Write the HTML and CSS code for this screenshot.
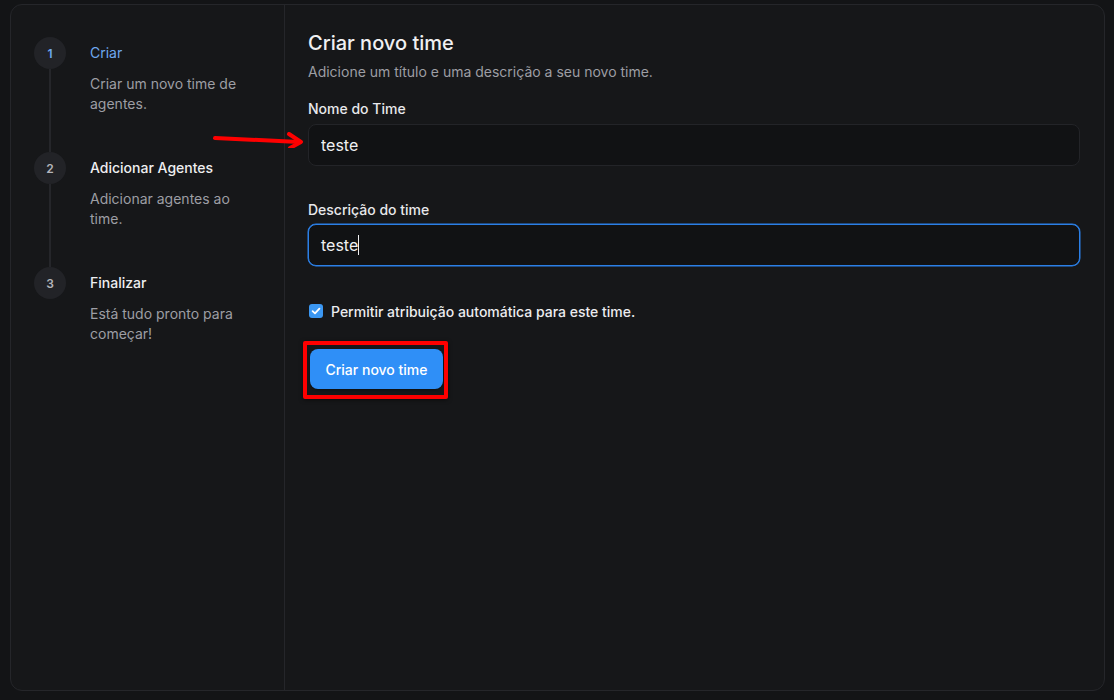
FILE: index.html
```html
<!DOCTYPE html>
<html lang="pt-BR">
<head>
	<meta charset="utf-8">
	<title>Criar novo time</title>
	<link rel="stylesheet" href="styles.css">
</head>
<body>
	<!-- Wizard card: steps on the left, form on the right. -->
	<div class="wizard">
		<aside class="steps">
			<div class="step is-active">
				<div class="step-rail">
					<span class="step-num">1</span>
					<span class="step-line"></span>
				</div>
				<div class="step-text">
					<div class="step-title">Criar</div>
					<div class="step-desc">Criar um novo time de agentes.</div>
				</div>
			</div>
			<div class="step">
				<div class="step-rail">
					<span class="step-num">2</span>
					<span class="step-line"></span>
				</div>
				<div class="step-text">
					<div class="step-title">Adicionar Agentes</div>
					<div class="step-desc">Adicionar agentes ao time.</div>
				</div>
			</div>
			<div class="step is-last">
				<div class="step-rail">
					<span class="step-num">3</span>
				</div>
				<div class="step-text">
					<div class="step-title">Finalizar</div>
					<div class="step-desc">Está tudo pronto para começar!</div>
				</div>
			</div>
		</aside>

		<main class="content">
			<h1 class="page-title">Criar novo time</h1>
			<p class="page-sub">Adicione um título e uma descrição a seu novo time.</p>

			<form class="team-form">
				<label class="field-label" for="team-name">Nome do Time</label>
				<div class="field">
					<input class="field-input" id="team-name" type="text" value="teste">
					<!-- annotation arrow -->
					<svg class="hint-arrow" width="92" height="16" viewBox="0 0 92 16">
						<path d="M2 6 L86 10" stroke="#f00" stroke-width="4" stroke-linecap="round" fill="none"/>
						<path d="M76 2 L88 10 L77 16" stroke="#f00" stroke-width="4" stroke-linecap="round" stroke-linejoin="round" fill="none"/>
					</svg>
				</div>

				<label class="field-label second" for="team-desc">Descrição do time</label>
				<div class="field tight">
					<div class="field-input is-focus" id="team-desc">teste<span class="caret"></span></div>
				</div>

				<label class="check-row">
					<span class="check-box">
						<svg width="10" height="10" viewBox="0 0 10 10"><path d="M1.6 5.2 L4 7.4 L8.4 2.6" stroke="#fff" stroke-width="1.8" fill="none" stroke-linecap="round" stroke-linejoin="round"/></svg>
					</span>
					Permitir atribuição automática para este time.
				</label>

				<span class="mark-box">
					<button type="button" class="btn-primary">Criar novo time</button>
				</span>
			</form>
		</main>
	</div>
</body>
</html>
```

FILE: styles.css
```css
html, body {
	margin: 0;
	background: #131416;
	font-family: Inter, "Noto Sans", sans-serif;
	color: #ececef;
}

body {
	padding: 4px 9px 9px 10px;
	box-sizing: border-box;
	height: 700px;
}

.wizard {
	display: flex;
	height: 687px;
	box-sizing: border-box;
	background: #161719;
	border: 1px solid #25262a;
	border-radius: 12px;
}

/* left column with the steps */
.steps {
	width: 274px;
	flex-shrink: 0;
	box-sizing: border-box;
	padding: 32px 24px 0 23px;
	border-right: 1px solid #25262a;
}

.step {
	display: flex;
	gap: 24px;
}

.step-rail {
	display: flex;
	flex-direction: column;
	align-items: center;
	width: 32px;
	flex-shrink: 0;
}

.step-num {
	width: 32px;
	height: 32px;
	border-radius: 50%;
	background: #222327;
	color: #b4b5ba;
	font-size: 12px;
	font-weight: 600;
	display: flex;
	align-items: center;
	justify-content: center;
}

.step.is-active .step-num {
	color: #6ea8ef;
}

.step-line {
	flex: 1;
	width: 2px;
	background: #25262a;
}

.step-text {
	width: 170px;
	padding-bottom: 38px;
}

.step-title {
	font-size: 14px;
	line-height: 32px;
	font-weight: 500;
	color: #eeeef0;
}

.step.is-active .step-title {
	color: #6ea8ef;
	font-weight: 400;
}

.step-desc {
	margin-top: 5px;
	font-size: 14px;
	line-height: 20px;
	color: #9d9ea4;
}

/* right column with the form */
.content {
	flex: 1;
	padding: 24px 24px 0 23px;
}

.page-title {
	margin: 0;
	font-size: 20px;
	line-height: 28px;
	font-weight: 500;
	color: #f0f0f2;
}

.page-sub {
	margin: 5px 0 0;
	font-size: 14px;
	line-height: 20px;
	color: #9d9ea4;
}

.team-form {
	display: flex;
	flex-direction: column;
	align-items: flex-start;
	margin-top: 17px;
}

.field-label {
	font-size: 14px;
	line-height: 20px;
	font-weight: 500;
	color: #e8e8eb;
}

.field-label.second {
	margin-top: 34px;
}

.field {
	position: relative;
	align-self: stretch;
	margin-top: 5px;
}

.field.tight {
	margin-top: 4px;
}

.field-input {
	display: block;
	width: 100%;
	height: 42px;
	box-sizing: border-box;
	padding: 0 12px;
	background: #111214;
	border: 1px solid #232428;
	border-radius: 8px;
	font-family: inherit;
	font-size: 16px;
	line-height: 40px;
	color: #f0f0f2;
	outline: none;
}

.field-input.is-focus {
	border: 1px solid #2b7fe6;
	box-shadow: 0 0 0 0.5px #2b7fe6;
}

.caret {
	display: inline-block;
	width: 1px;
	height: 20px;
	background: #f0f0f2;
	vertical-align: -4px;
}

.hint-arrow {
	position: absolute;
	left: -95px;
	top: 8px;
}

.check-row {
	display: flex;
	align-items: center;
	gap: 8px;
	margin-top: 35px;
	height: 20px;
	font-size: 14px;
	font-weight: 500;
	color: #ececef;
}

.check-box {
	width: 14px;
	height: 14px;
	margin-left: 1px;
	border-radius: 3px;
	background: #3b97f2;
	display: flex;
	align-items: center;
	justify-content: center;
}

.mark-box {
	display: inline-block;
	margin-top: 20px;
	margin-left: -5px;
	padding: 4px 1px 6px 3px;
	border: 4px solid #ff0000;
	border-radius: 2px;
	box-shadow: 0 1px 4px rgba(0, 0, 0, 0.5);
}

.btn-primary {
	display: block;
	width: 133px;
	height: 40px;
	border: none;
	border-radius: 8px;
	background: #2f8ff7;
	color: #fff;
	font-family: inherit;
	font-size: 14px;
	font-weight: 500;
	box-shadow: 0 1px 2px rgba(0, 0, 0, 0.4);
}
```
